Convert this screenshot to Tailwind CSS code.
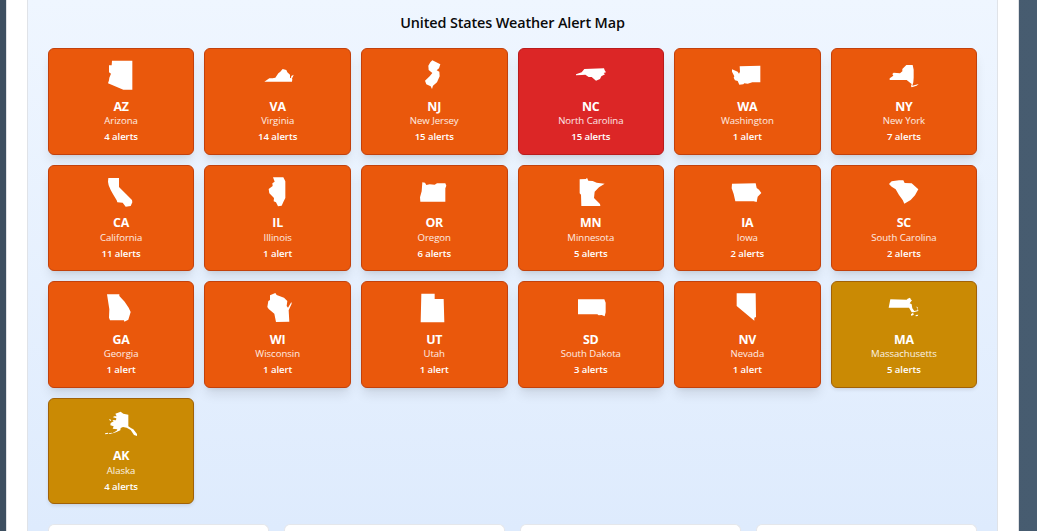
<!DOCTYPE html>
<html lang="en">
<head>
<meta charset="utf-8">
<title>United States Weather Alert Map</title>
<script src="https://cdn.jsdelivr.net/npm/@tailwindcss/browser@4"></script>
</head>
<body class="h-[531px] overflow-hidden bg-linear-to-r from-[#3d4f60] to-[#475c70] pl-[6px] pr-[18px] font-['Segoe_UI','Open_Sans',sans-serif]">
<div class="h-full border-x border-[#dfe1e4] bg-white px-5">
<main class="flex h-full flex-col overflow-hidden border-x border-[#e0e3e8] bg-linear-to-b from-[#eff6ff] to-[#deebfd] pt-[13px] pr-[19.8px] pl-[19.85px]">
<h1 class="h-[35.2px] shrink-0 text-center text-[14.4px] leading-5 font-semibold tracking-[-0.13px] text-[#0a0a0a]">United States Weather Alert Map</h1>
<section id="states" class="grid shrink-0 grid-cols-6 gap-x-[10px] gap-y-[10.2px]"></section>
<section class="mt-[19.8px] grid min-h-0 flex-1 grid-cols-4 gap-[14.4px]">
<div class="rounded-t-md border border-b-0 border-gray-200 bg-white"></div>
<div class="rounded-t-md border border-b-0 border-gray-200 bg-white"></div>
<div class="rounded-t-md border border-b-0 border-gray-200 bg-white"></div>
<div class="rounded-t-md border border-b-0 border-gray-200 bg-white"></div>
</section>
</main>
</div>
<script>
const tones = {
  o: 'bg-[#ea580c] border-[#c2410c] shadow-[0_8px_12px_-2px_rgba(0,0,0,0.1),0_3px_5px_-3px_rgba(0,0,0,0.1)]',
  r: 'bg-[#dc2626] border-[#b91c1c] shadow-[0_8px_12px_-2px_rgba(0,0,0,0.1),0_3px_5px_-3px_rgba(0,0,0,0.1)]',
  y: 'bg-[#ca8a04] border-[#a16207] shadow-[0_2px_4px_-1px_rgba(0,0,0,0.14)]'
};
const states = [
['AZ','Arizona','4 alerts','o','45 28','M66 33H127V120H100L54 101L57 92L58 84L63 72L57 68V47H65Z'],
['VA','Virginia','14 alerts','o','513 28','M520 96L535 86L545 86L553 84L562 71L568 66L575 58L586 61L589 68L597 75V84L604 87L603 96ZM600 86L601 79L608 75L605 83L601 88Z'],
['NJ','New Jersey','15 alerts','o','55 28','M98 32L122 44L118 56L111 62L119 66L120 80L112 98L100 108L97 118L93 110L80 104L76 93L90 80L98 70L87 61L86 48L92 38Z'],
['NC','North Carolina','15 alerts','r','525 28','M528 77L528 74L545 68L553 58L612 56L614 62L618 68L611 70L615 74L604 80L600 88L588 93L575 82L566 82L556 75L545 76Z'],
['WA','Washington','1 alert','o','50 28','M76 50L138 48V98L114 98L100 102L90 101L87 104L75 105L70 94L62 92L58 84L60 80L53 66V59L70 66L74 72L77 66Z'],
['NY','New York','7 alerts','o','519 28','M524 91V86L535 78L532 73L536 69L555 71L562 65V58L574 46H593L596 60V84L595 98L592 108L600 106L611 103L605 108L590 113L588 110L590 103L587 101L575 91Z'],
['CA','California','11 alerts','o','45 18','M55 24H87V51L126 90L127 97L122 108L107 110L98 98L82 97L80 91L70 74L62 60L56 46L54 35Z'],
['IL','Illinois','1 alert','o','514 18','M547 22H578L584 34V84L578 96L573 107L562 109L556 97L549 94L550 84L536 70L534 57L546 48L545 40L552 35Z'],
['OR','Oregon','6 alerts','o','55 18','M68 37L76 38L80 45L90 43L105 44L112 40H137L140 47L137 55V95H62L61 82L66 64Z'],
['MN','Minnesota','5 alerts','o','525 18','M539 28L558 27L561 23L565 32L578 33L590 38L614 41L597 52L584 65L582 84L600 102L601 108H544L543 74L539 70Z'],
['IA','Iowa','2 alerts','o','50 18','M53 41L124 40L127 54L134 59L141 69L130 80L127 96L118 94H63L58 72L52 55Z'],
['SC','South Carolina','2 alerts','o','519 18','M522 42L530 34L552 31H565L569 39L590 40L610 58L600 76L587 90L568 101L563 90L552 75L542 58L530 50Z'],
['GA','Georgia','1 alert','o','45 23','M51 30H88V35L104 52L116 70L122 83L115 106L103 112L102 108H60L57 100L58 75Z'],
['WI','Wisconsin','1 alert','o','514 23','M538 33L554 26L558 32L580 40L590 50L588 65L592 70L602 53L603 58L594 78L596 112L556 113L551 88L534 74L530 68L533 50L538 47Z'],
['UT','Utah','1 alert','o','55 23','M65 28H105V44H132L134 114H63Z'],
['SD','South Dakota','3 alerts','o','525 23','M534 45H613L617 55V84L614 96L605 92L596 93L592 90H534Z'],
['NV','Nevada','1 alert','o','50 23','M67 27H124L125 98L120 100V109L67 65Z'],
['MA','Massachusetts','5 alerts','y','519 23','M526 45L575 46L578 43L585 40L588 46L591 48L584 57L590 60L592 72L598 80L608 78L607 70L602 67L608 68L610 80L596 84L590 84L582 70L521 70ZM588 90L593 86L597 89L594 93L588 94ZM602 92L610 91L608 95L602 96Z'],
['AK','Alaska','4 alerts','y','315 43','M346 57L362 51L370 57L385 60V95L394 101L400 104L411 118V124L402 121L392 106L380 99L369 97L362 100L361 107L348 113L334 117L350 108L352 104L338 102L341 95L331 92L332 85L341 80L337 76L348 77L349 71L339 68L342 65L350 65ZM328 73L334 76L332 79L328 76ZM315 116L324 114L325 117L316 119ZM327 116L336 114L334 117L327 118Z']
];
document.getElementById('states').innerHTML = states.map(([code, name, alerts, tone, origin, d]) => `
<article class="flex h-[106.4px] flex-col items-center rounded-md border pt-[10px] text-white ${tones[tone]}">
<svg class="size-8 shrink-0" viewBox="${origin} 96 96" fill="white"><path d="${d}"/></svg>
<div class="mt-[7.4px] h-4 text-[12.4px] leading-4 font-bold tracking-[-0.2px]">${code}</div>
<div class="-mt-[0.4px] h-[13px] text-[9.6px] leading-[13px] tracking-[-0.04px] text-white/90">${name}</div>
<div class="mt-[3px] text-[9.6px] leading-[13px] font-semibold tracking-[-0.08px]">${alerts}</div>
</article>`).join('');
</script>
</body>
</html>
